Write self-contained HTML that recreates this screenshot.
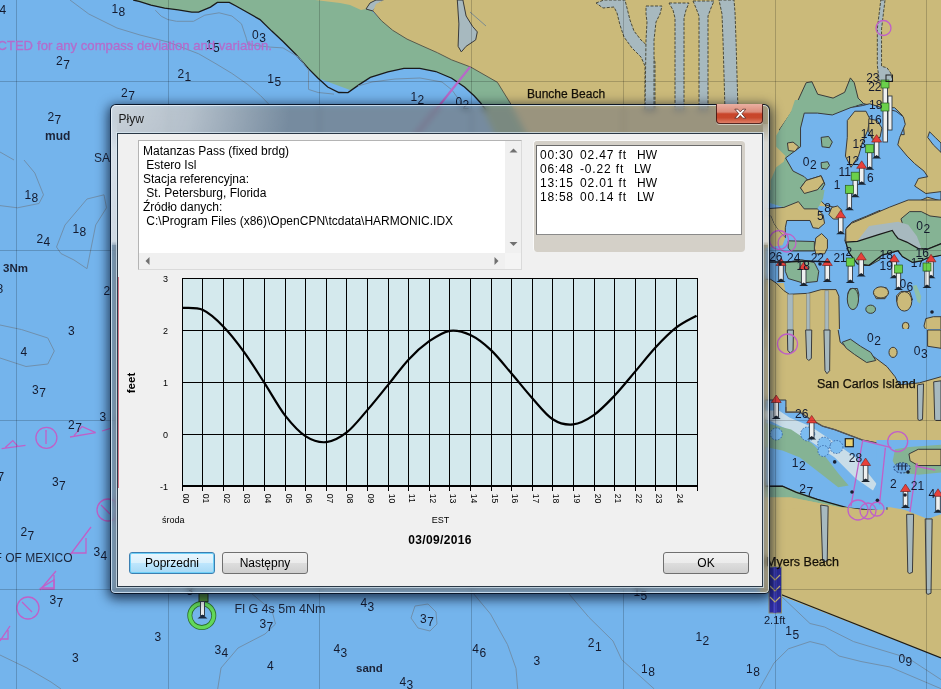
<!DOCTYPE html>
<html><head><meta charset="utf-8">
<style>
html,body{margin:0;padding:0;width:941px;height:689px;overflow:hidden;background:#74b4ec;font-family:"Liberation Sans",sans-serif;}
#map{position:absolute;left:0;top:0;}
.abs{position:absolute;}
#frame{position:absolute;left:110px;top:104px;width:658px;height:488px;border:1px solid rgba(0,12,30,0.92);border-radius:6px 6px 5px 5px;
  backdrop-filter:blur(3px) saturate(0.45) brightness(0.78);-webkit-backdrop-filter:blur(3px) saturate(0.45) brightness(0.78);background:rgba(255,255,255,0.03);
  box-shadow:0 3px 12px 2px rgba(0,10,30,0.72), inset 0 0 0 1px rgba(225,238,250,0.75);}
#sheen{position:absolute;left:111px;top:105px;width:656px;height:486px;border-radius:5px 5px 4px 4px;
  background:radial-gradient(ellipse 180px 150px at 0px 0px, rgba(255,255,255,0.62) 0%, rgba(255,255,255,0.45) 45%, rgba(255,255,255,0) 100%);}
#title{position:absolute;left:118.5px;top:112px;font-size:12px;color:#1a1a1a;}
#close{position:absolute;left:716px;top:104px;width:45px;height:19px;border:1px solid rgba(70,25,20,0.9);border-top:none;border-radius:0 0 4px 4px;
  background:linear-gradient(#eab0a2 0%,#dc8c7a 42%,#c9452a 52%,#c8482c 72%,#e08068 100%);box-shadow:0 1px 0 rgba(255,255,255,0.5);}
#client{position:absolute;left:117px;top:133px;width:644px;height:452px;background:#f0f0f0;border:1px solid #2a3846;box-shadow:0 0 0 1px rgba(220,235,245,0.7);}
#txt{position:absolute;left:138px;top:140px;width:382px;height:128px;background:#fff;border:1px solid;border-color:#b4b4b4 #dadada #dadada #b4b4b4;}
#txtc{position:absolute;left:143px;top:144px;font-size:12px;line-height:14px;color:#000;white-space:pre;}
#vs{position:absolute;left:505px;top:141px;width:16px;height:112px;background:#f0f0f0;}
#hs{position:absolute;left:139px;top:253px;width:366px;height:16px;background:#f0f0f0;}
#corner{position:absolute;left:505px;top:253px;width:16px;height:16px;background:#f4f4f4;}
#tpanel{position:absolute;left:533px;top:140px;width:211px;height:111px;background:#d4d0c8;border-radius:4px;border-top:1px solid #fafafa;border-left:1px solid #fafafa;}
#tlist{position:absolute;left:536px;top:145px;width:204px;height:88px;background:#fff;border:1px solid #8a8a8a;border-top-color:#6a6a6a;border-left-color:#6a6a6a;}
.tl{position:absolute;font-size:12px;line-height:14px;color:#000;white-space:pre;}
#tlcx{position:absolute;left:540px;top:147px;font-size:12px;line-height:14px;color:#000;white-space:pre;}
.btn{position:absolute;height:20px;border:1px solid #707070;border-radius:3px;background:linear-gradient(#f2f2f2 0%,#ebebeb 50%,#dddddd 51%,#cfcfcf 100%);font-size:12px;text-align:center;line-height:20px;color:#000;}
.btn.def{border-color:#3c7fb1;background:linear-gradient(#eaf6fd 0%,#d9f0fc 50%,#bee6fd 51%,#a7d9f5 100%);box-shadow:inset 0 0 0 1px #6fd0f8;}
</style></head><body>
<svg id="map" width="941" height="689" viewBox="0 0 941 689">
<defs>
<style>
.w{fill:#74b4ec}.g{fill:#85b394}.t{fill:#cbba7a}.c{fill:#a7b9bf}
.k{stroke:#1a1a1a;stroke-width:1.3;fill:none}
.ks{stroke:#3a3a3a;stroke-width:1;vector-effect:non-scaling-stroke}
.ks *{vector-effect:non-scaling-stroke}
.ct{stroke:#5a5a48;stroke-width:1;fill:none;vector-effect:non-scaling-stroke}
.gr{stroke:#8e9c9c;stroke-width:1;fill:none}
</style>
</defs>
<rect width="941" height="689" class="w"/>
<!-- top green band -->
<path class="g" d="M133.2,0 L380,0 L371.9,11.2 L381.5,20.8 L392.7,30.3 L407,39.1 L423,46.3 L437.4,52.7 L451.7,59.9 L470.6,67 L497.4,82.3 L510.8,104 L535,145 L500,145 L318.1,78.2 L308.5,68.6 L295.7,54.3 L283,41.5 L271.8,31.1 L260,19.6 L248,12.8 L236,6 L229.3,2.4 L217.3,2.4 L210.5,7.1 L198.6,12.2 L191.8,12.2 L178.2,9.9 L164.6,8.2 L151,5.1 L139.1,1.4 Z"/>
<!-- blue bay under green -->
<path class="w" d="M300,100 L318.1,78.2 L327.7,87 L338.8,92.5 L348,92.6 L359.2,84.6 L370.3,77.4 L387.9,71.8 L403.9,68.3 L419.8,68.3 L435.8,71.5 L451.7,78.2 L464.5,87 L474.1,95.8 L480,102.2 L500,145 L300,145 Z"/>
<path class="k" d="M133.2,0 L139.1,1.4 L151,5.1 L164.6,8.2 L178.2,9.9 L191.8,12.2 L198.6,12.2 L210.5,7.1 L217.3,2.4 L229.3,2.4 L236,6 L248,12.8 L260,19.6 L271.8,31.1 L283,41.5 L295.7,54.3 L308.5,68.6 L318.1,78.2 L327.7,87 L338.8,92.5 L348,92.6 L359.2,84.6 L370.3,77.4 L387.9,71.8 L403.9,68.3 L419.8,68.3 L435.8,71.5 L451.7,78.2 L464.5,87 L474.1,95.8 L480,102.2 L486,110"/>
<!-- top tan land -->
<path class="t" d="M315,0 L376,0 L370,3 L366,9 L361,10 L350,5 L340,3 Z"/>
<path class="c ks" d="M366,9 L370,3 L376,0 L386,0 L378,4 L373,11 Z"/>
<path class="t" d="M384,0 L941,0 L941,658 L782,596 L770,593 L760,593 L760,160 L540,160 L510.8,104 L497.4,82.3 L470.6,67 L451.7,59.9 L437.4,52.7 L423,46.3 L407,39.1 L392.7,30.3 L381.5,20.8 L373,11 L376,4 Z"/>
<path class="ct" d="M373,11 L381.5,20.8 L392.7,30.3 L407,39.1 L423,46.3 L437.4,52.7 L451.7,59.9 L470.6,67 L497.4,82.3 L510.8,104"/>
<!-- grey creek near 460 -->
<path class="c ks" d="M457.3,0 L458.9,23.9 L458.1,46.3 L461.3,51.9 L466.1,46.3 L475.7,39.9 L477.3,31.9 L472.5,26.3 L466.1,16 L462.9,0 Z"/>
<!-- canals top -->
<g class="c" stroke="#4a4a3a" stroke-width="1" stroke-dasharray="3,1.5">
<path d="M596,3 L604,0 L625,0 L627,8 L630,20 L634,31 L641,40 L651,49 L655,62 L655,110 L645,110 L645,66 L641,57 L632,48 L624,37 L620,25 L617,13 L614,7 L603,8 Z"/>
<path d="M646,6 L662,6 L660,14 L656,22 L654,40 L654,110 L645,110 L646,40 L647,22 L646,14 Z"/>
<path d="M669,3 L689,3 L686,10 L684,18 L684,110 L675,110 L675,18 L673,10 Z"/>
<path d="M693,1 L714,1 L711,8 L708,16 L708,110 L699,110 L699,16 L696,8 Z"/>
<path d="M719,0 L734,0 L735,12 L736,40 L738,110 L725,110 L723,40 L722,14 Z"/>
</g>
<!-- right region E: y 0-130 -->
<g transform="translate(760,0) scale(0.19234)">
<path class="c" stroke="#4a4a3a" stroke-width="1" stroke-dasharray="3,1.5" vector-effect="non-scaling-stroke" d="M628,0 L650,0 L632,150 L632,345 L660,352 L680,380 L690,420 L650,430 L620,420 L610,340 L610,150 Z"/>
<path class="g ks" d="M100,676 L180,560 L240,430 L270,425 L300,490 L380,510 L440,480 L470,405 L490,430 L510,510 L540,540 L600,550 L620,560 L620,676 Z"/>
<path class="w ks" d="M220,600 L250,580 L350,600 L420,570 L540,540 L580,560 L660,560 L700,560 L740,600 L750,700 L220,700 Z"/>
</g>
<!-- right region A: y 100-220 -->
<g transform="translate(765,100) scale(0.18702)">
<path class="g" d="M160,0 L500,0 L510,20 L460,40 L360,80 L280,70 L210,70 L190,150 L190,250 L110,310 L150,380 L210,410 L230,430 L300,410 L320,450 L280,520 L240,560 L170,560 L110,520 L30,540 L30,430 L60,360 L100,330 L110,300 L60,250 L60,190 L140,60 Z"/>
<path class="w ks" d="M210,70 L280,70 L360,80 L460,40 L520,30 L560,20 L620,40 L700,60 L740,90 L750,130 L720,200 L710,240 L760,300 L800,340 L850,380 L870,410 L820,420 L800,460 L860,500 L941,490 L941,540 L870,520 L780,560 L700,600 L640,620 L600,642 L420,642 L390,580 L320,560 L280,520 L320,450 L300,410 L230,430 L210,410 L150,380 L110,310 L190,250 L190,150 Z"/>
<path class="t ks" d="M440,110 L480,60 L540,60 L560,100 L550,160 L520,230 L500,300 L460,360 L430,300 L440,200 Z"/>
<path class="t ks" d="M555,100 L600,110 L625,150 L615,200 L575,210 L555,170 Z"/>
<path class="g ks" d="M300,200 L340,195 L360,225 L345,255 L305,250 Z"/>
<path class="g ks" d="M300,335 L335,330 L345,350 L330,370 L302,365 Z"/>
<path class="t ks" d="M120,230 L150,225 L180,250 L160,275 L125,270 Z"/>
<path class="t ks" d="M190,470 L220,430 L300,405 L315,440 L280,480 L210,500 Z"/>
<path class="w ks" d="M880,170 L910,200 L941,230 L941,280 L900,240 L870,200 Z"/>
</g>
<path class="w" d="M769,200 L941,220 L941,345 L769,345 Z"/>
<!-- G: [765,190] s=6.887 -->
<g transform="translate(765,190) scale(0.14520)">
<path class="g" d="M0,0 L410,0 L400,60 L360,130 L270,130 L230,80 L130,120 L30,90 L0,90 Z"/>
<path class="t ks" d="M244.5,-14.5 L283,-66 L386,-98 L405.6,-53 L361,-1.4 L271,24 Z"/>
<path class="w" d="M0,90 L30,90 L130,120 L140,210 L560,210 L560,700 L0,700 Z"/>
<path class="t ks" d="M0,130 L130,120 L230,80 L270,130 L360,130 L400,170 L410,230 L370,265 L330,260 L310,210 L150,210 L140,260 L140,330 L100,290 L60,230 L40,180 L0,180 Z"/>
<path class="t ks" d="M440,170 L460,120 L500,110 L530,140 L520,200 L470,200 Z"/>
<path class="t ks" d="M340,400 L350,330 L390,300 L430,340 L430,400 L410,440 L350,440 Z"/>
<path class="g ks" d="M160,350 L340,355 L340,420 L180,420 L160,400 Z"/>
<path class="g ks" d="M140,500 L250,480 L340,500 L370,560 L360,630 L260,640 L160,610 L140,560 Z"/>
<path class="t" d="M0,180 L40,180 L60,230 L100,290 L140,330 L120,380 L0,400 Z"/>
<path class="t ks" d="M550,350 L560,260 L600,220 L700,180 L792,140 L792,360 Z"/>
<path class="c" d="M640,350 L700,260 L792,230 L792,320 Z"/>
<path class="g ks" d="M550,350 L792,300 L792,480 L720,520 L660,520 L610,450 L580,400 Z"/>
<path class="t" d="M0,640 L130,640 L140,700 L0,700 Z"/>
</g>
<!-- F: [840,200] s=6.891 -->
<g transform="translate(840,200) scale(0.14512)">
<path class="t ks" d="M40,200 L80,160 L200,110 L340,50 L470,0 L700,0 L700,380 L600,400 L560,420 L500,430 L430,390 L400,350 L290,380 L200,450 L120,440 L60,360 L40,290 Z"/>
<path class="g ks" d="M420,130 L480,80 L560,80 L620,110 L700,120 L700,300 L600,340 L540,330 L470,290 Z"/>
<path class="c" d="M120,280 L200,180 L400,150 L470,170 L530,250 L560,330 L600,380 L700,330 L700,360 L560,360 L460,290 L400,265 L380,240 L360,210 L260,240 L120,285 Z"/>
<path class="g" d="M40,290 L120,285 L260,240 L360,210 L380,240 L400,265 L460,290 L540,335 L600,340 L700,300 L700,380 L600,400 L560,420 L500,430 L430,390 L400,350 L290,380 L200,450 L120,440 L60,360 Z"/>
<path class="k" d="M40,290 L120,285 L260,240 L360,210 L380,240 L400,265 L460,290 L540,335 L600,340 L700,300" vector-effect="non-scaling-stroke" style="stroke-width:1.2"/>
<path class="k" d="M40,290 L60,360 L120,440 L200,450 L290,380 L400,350 L430,390 L500,430 L560,420 L600,400 L700,380" vector-effect="non-scaling-stroke" style="stroke-width:1.2"/>
<path class="t ks" d="M230,640 L260,605 L320,605 L335,640 L310,680 L250,680 Z"/>
<path class="t ks" d="M390,660 L420,630 L480,630 L500,689 L390,700 Z"/>
<path class="g ks" d="M55,640 L70,610 L120,610 L130,650 L125,700 L55,700 Z"/>
</g>
<!-- I: [765,255] s=5.347 -->
<g transform="translate(765,255) scale(0.18702)">
<path class="t ks" d="M0,130 L30,130 L60,150 L100,190 L130,210 L230,205 L300,185 L380,185 L395,220 L400,500 L0,500 Z"/>
<g class="c" stroke="#505050" stroke-width="1.6" vector-effect="non-scaling-stroke">
<path d="M120,210 L150,210 L150,500 L120,500 Z"/>
<path d="M222,205 L240,205 L240,500 L222,500 Z"/>
<path d="M320,190 L340,190 L340,500 L320,500 Z"/>
</g>
<ellipse class="g ks" cx="470" cy="235" rx="30" ry="57"/>
<ellipse class="g ks" cx="565" cy="290" rx="26" ry="22"/>
<ellipse class="t ks" cx="620" cy="200" rx="40" ry="30"/>
<ellipse class="t ks" cx="745" cy="248" rx="40" ry="52"/>
<ellipse class="t ks" cx="752" cy="380" rx="18" ry="20"/>
<path class="t ks" d="M860,340 L900,330 L941,330 L941,500 L880,500 L870,420 L850,380 Z"/>
<path class="g ks" d="M410,481 L430,455 L470,450 L495,481 L495,500 L410,500 Z"/>
<path fill="#8fc0a8" d="M790,165 L810,160 L835,220 L830,260 L815,250 Z"/>
</g>
<!-- C: [765,330] s=4.92 -->
<g transform="translate(765,330) scale(0.20325)">
<path class="t" d="M0,0 L360,0 L370,60 L420,100 L520,120 L600,180 L640,230 L660,270 L760,260 L866,230 L866,400 L0,400 Z"/>
<path class="w" d="M360,-5 L360,0 L370,60 L420,100 L520,120 L600,180 L640,230 L660,270 L760,260 L866,230 L866,-5 Z"/><path class="ks" fill="none" d="M360,0 L370,60 L420,100 L520,120 L600,180 L640,230 L660,270 L760,260 L866,230"/>
<path class="t ks" d="M800,0 L866,0 L866,90 L800,80 Z"/>
<path class="g ks" d="M380,60 L420,45 L470,80 L520,110 L545,150 L500,160 L440,120 L400,90 Z"/>
<ellipse class="t ks" cx="630" cy="110" rx="20" ry="25"/>
<g class="c ks">
<path d="M110,0 L140,0 L138,100 L125,115 L112,100 Z"/>
<path d="M200,0 L230,0 L228,140 L215,150 L205,140 Z"/>
<path d="M290,0 L320,0 L318,200 L305,215 L295,200 Z"/>
<path d="M750,270 L780,265 L775,440 L760,445 L752,440 Z"/>
<path d="M830,255 L866,250 L866,445 L840,445 L835,440 Z"/>
</g>
</g>
<!-- H: [765,400] s=5.739 -->
<g transform="translate(765,400) scale(0.17425)">
<path class="w ks" d="M0,0 L120,0 L120,40 L120,70 L200,70 L260,110 L330,150 L400,170 L480,200 L560,230 L660,250 L700,250 L700,640 L480,625 L300,570 L180,530 L100,495 L0,495 Z"/>
<path fill="#c9dde8" d="M80,60 L140,100 L260,150 L380,230 L520,330 L640,480 L620,520 L520,450 L400,330 L250,230 L30,120 L0,110 L0,60 Z"/>
<path class="g" d="M0,130 L150,170 L270,250 L350,330 L420,420 L480,490 L420,500 L330,430 L200,330 L100,290 L0,270 Z"/>
<path class="g" d="M0,490 L100,495 L200,530 L300,570 L450,610 L480,625 L300,590 L150,560 L0,560 Z"/>
<path class="t" d="M0,560 L150,560 L300,590 L480,625 L700,645 L700,700 L0,700 Z"/>
<path class="k" vector-effect="non-scaling-stroke" d="M0,495 L100,495 L180,530 L300,570 L480,620 L700,640"/>
<path class="k" vector-effect="non-scaling-stroke" style="stroke:#555" d="M120,40 L120,70 L200,70 L260,110 L330,150 L400,170 L480,200 L560,230 L660,250"/>
</g>
<!-- D: [765,440] s=4.307 -->
<g transform="translate(765,440) scale(0.23218)">
<path class="t" d="M0,300 L350,290 L420,300 L600,300 L650,320 L700,340 L758,320 L758,939 L73,672 L20,658 L0,658 Z"/>
<path class="w" d="M480,0 L758,0 L758,320 L700,340 L650,320 L600,300 L540,290 L480,290 Z"/>
<path class="g" d="M560,40 L620,30 L758,20 L758,140 L660,150 L580,140 L550,90 Z"/>
<path class="t ks" d="M620,60 L660,40 L758,40 L758,110 L660,110 L625,90 Z"/>
<ellipse cx="590" cy="120" rx="35" ry="22" fill="#6aa8e0" stroke="#203a70" stroke-width="1" stroke-dasharray="2,1.5" vector-effect="non-scaling-stroke"/><path d="M565,112 L615,112 M575,100 L575,130 M590,100 L590,130 M605,100 L605,130" stroke="#203050" stroke-width="1.2" vector-effect="non-scaling-stroke"/>
<g class="c ks">
<path d="M240,280 L272,285 L268,520 L255,525 L248,520 Z"/>
<path d="M610,320 L640,320 L635,570 L622,575 L615,570 Z"/>
<path d="M690,340 L720,340 L715,660 L702,665 L695,660 Z"/>
</g>
</g>
<!-- bottom right tan -->
<path class="k" d="M781,594.5 L941,658"/>
<g fill="none" stroke="#7090ad" stroke-width="1">
<path d="M155.3,10.2 L161.2,16.2 L168,19.6 L176.5,21.3 L193.5,21.3 L204.8,15.2 L219.1,12.8 L231.9,16 L241.5,23.9 L246.3,38.3 L247.9,44.7 L270.2,47.1 L283,47.9 L298.9,57.4 L308.5,70.2 L308.5,89.4 L318.1,92.5 L334,94.1"/>
<path d="M70,0 L88.8,14 L117,28 L140,35 L168,42 L198.7,53.8 L216,63.8 L231.9,73.4 L247.9,84.6 L260.6,95.7 L268.6,104"/>
<path d="M0,152 L14,160"/>
<path d="M0,205.6 L17.4,207.8 L39,203.5 L43.5,194.8 L34.8,173 L24,160"/>
<path d="M56.5,247 L65,225 L87,199 L104,194.8 L106.5,207.8 L95.7,225 L91.3,247 L87,268.7 L74,260 L60.9,253.5 Z"/>
<path d="M0,325 L21.7,329.6 L47.8,338 L54.3,351 L47.8,364 L26,366.5 L0,358"/>
<path d="M473.5,593.6 L490.5,614 L507.5,644.6 L516,668.4 L517.7,689"/>
<path d="M568.7,593.6 L589,617.4 L613,641 L621.7,659.7 L654.3,689"/>
<path d="M781,596 L810,623.5 L824.6,627 L853.6,641.6 L908,658 L941,679.6"/>
<path d="M759.4,689 L774,663 L788.4,648.8 L810,641.6 L824.6,645.2 L839,656 L861,661.5 L890,667 L941,688.7"/>
<path d="M0,655 L27,668 L51,682 L61,689"/>
<path d="M251.7,593.6 L272,610.6 L275.5,624 L265,634 L238,648 L221,668 L217.7,689"/>
<path d="M358,86 L372,82 L395,79 L420,78 L442,82 L452,90 L462,104"/>
<path d="M415,606 L428,604 L436,612 L437,624 L430,631 L418,628 L411,618 Z"/>
</g>
<circle cx="776.3" cy="434" r="6" fill="#7cbcf0" stroke="#3a6aa8" stroke-width="1" stroke-dasharray="1.5,1.5"/>
<circle cx="807.7" cy="434" r="7" fill="#7cbcf0" stroke="#3a6aa8" stroke-width="1" stroke-dasharray="1.5,1.5"/>
<circle cx="824.2" cy="443.6" r="6.5" fill="#7cbcf0" stroke="#3a6aa8" stroke-width="1" stroke-dasharray="1.5,1.5"/>
<circle cx="836.4" cy="447" r="6.5" fill="#7cbcf0" stroke="#3a6aa8" stroke-width="1" stroke-dasharray="1.5,1.5"/>
<circle cx="823.4" cy="451" r="5.5" fill="#7cbcf0" stroke="#3a6aa8" stroke-width="1" stroke-dasharray="1.5,1.5"/>
<path d="M470,67 L400,155" stroke="#b868c8" stroke-width="2.2" fill="none"/>
<path d="M470,12 L486,26" stroke="#7a8a90" stroke-width="1" fill="none"/>
<g stroke="#c060c8" stroke-width="1.3" fill="none">
<circle cx="46.4" cy="437.8" r="10.5"/><path d="M46,432 L46,444 M45,431 L47,431"/>
<path d="M1.6,448.6 L25.5,445.4 M5,447.8 L12.8,440.6 L18,446.4"/>
<path d="M70,437 L95.7,432.6 M74,435.6 L82,426.5 L95.7,432.6"/><path d="M102,431 L111.6,428"/>
<circle cx="108" cy="510" r="11"/><path d="M101,505 L110,514"/>
<path d="M70,555 L91,527 M72,553 L86,553 L86,538"/>
<path d="M40,590 L56,571 M42,589 L54,589 L54,575"/>
<circle cx="28" cy="608" r="11"/><path d="M22,602 L32,612"/>
<path d="M41,588 L54,580 L54,588 Z"/>
<path d="M0,641 L10,626 M0,639 L8,639 L8,630"/>
</g>
<circle cx="201.8" cy="615.6" r="12" fill="none" stroke="#2d6e2d" stroke-width="5"/>
<circle cx="201.8" cy="615.6" r="12" fill="none" stroke="#62d85a" stroke-width="3.4"/>
<rect x="199" y="593.5" width="9" height="8" fill="#5a9a3a" stroke="#2a3a20" stroke-width="1"/>
<rect x="200.5" y="601.5" width="4" height="14" fill="#e8ecec" stroke="#34404a" stroke-width="1"/>
<path d="M197.5,618.5 L202.5,614.5 L207.5,618.5 Z" fill="#1a2a40"/>
<rect x="769" y="567" width="12.5" height="46" fill="#2c2c9c" stroke="#8a8a70" stroke-width="1"/>
<rect x="773.5" y="567" width="3" height="46" fill="#4848c8"/>
<path d="M770,575 L775,580 L780,575 M770,586 L775,591 L780,586 M770,597 L775,602 L780,597" stroke="#c8b878" stroke-width="1.2" fill="none"/>
<rect x="874.3" y="141.6" width="4.6" height="15" fill="#eef0f0" stroke="#303840" stroke-width="0.9"/>
<path d="M872.1,158.6 L876.6,155.1 L881.1,158.6 Z" fill="#1a2430"/>
<path d="M876.6,134.6 L881.6,142.1 L871.6,142.1 Z" fill="#e8403a" stroke="#702020" stroke-width="0.6"/>
<rect x="859.4" y="167.8" width="4.6" height="15" fill="#eef0f0" stroke="#303840" stroke-width="0.9"/>
<path d="M857.2,184.8 L861.7,181.3 L866.2,184.8 Z" fill="#1a2430"/>
<path d="M861.7,160.8 L866.7,168.3 L856.7,168.3 Z" fill="#e8403a" stroke="#702020" stroke-width="0.6"/>
<rect x="838.4" y="217.3" width="4.6" height="15" fill="#eef0f0" stroke="#303840" stroke-width="0.9"/>
<path d="M836.2,234.3 L840.7,230.8 L845.2,234.3 Z" fill="#1a2430"/>
<path d="M840.7,210.3 L845.7,217.8 L835.7,217.8 Z" fill="#e8403a" stroke="#702020" stroke-width="0.6"/>
<rect x="778.7" y="265.0" width="4.6" height="15" fill="#eef0f0" stroke="#303840" stroke-width="0.9"/>
<path d="M776.5,282.0 L781.0,278.5 L785.5,282.0 Z" fill="#1a2430"/>
<path d="M781.0,258.0 L786.0,265.5 L776.0,265.5 Z" fill="#e8403a" stroke="#702020" stroke-width="0.6"/>
<rect x="801.4" y="269.0" width="4.6" height="15" fill="#eef0f0" stroke="#303840" stroke-width="0.9"/>
<path d="M799.2,286.0 L803.7,282.5 L808.2,286.0 Z" fill="#1a2430"/>
<path d="M803.7,262.0 L808.7,269.5 L798.7,269.5 Z" fill="#e8403a" stroke="#702020" stroke-width="0.6"/>
<rect x="825.0" y="265.0" width="4.6" height="15" fill="#eef0f0" stroke="#303840" stroke-width="0.9"/>
<path d="M822.8,282.0 L827.3,278.5 L831.8,282.0 Z" fill="#1a2430"/>
<path d="M827.3,258.0 L832.3,265.5 L822.3,265.5 Z" fill="#e8403a" stroke="#702020" stroke-width="0.6"/>
<rect x="858.9" y="259.4" width="4.6" height="15" fill="#eef0f0" stroke="#303840" stroke-width="0.9"/>
<path d="M856.7,276.4 L861.2,272.9 L865.7,276.4 Z" fill="#1a2430"/>
<path d="M861.2,252.4 L866.2,259.9 L856.2,259.9 Z" fill="#e8403a" stroke="#702020" stroke-width="0.6"/>
<rect x="891.9" y="261.3" width="4.6" height="15" fill="#eef0f0" stroke="#303840" stroke-width="0.9"/>
<path d="M889.7,278.3 L894.2,274.8 L898.7,278.3 Z" fill="#1a2430"/>
<path d="M894.2,254.3 L899.2,261.8 L889.2,261.8 Z" fill="#e8403a" stroke="#702020" stroke-width="0.6"/>
<rect x="928.7" y="261.3" width="4.6" height="15" fill="#eef0f0" stroke="#303840" stroke-width="0.9"/>
<path d="M926.5,278.3 L931.0,274.8 L935.5,278.3 Z" fill="#1a2430"/>
<path d="M931.0,254.3 L936.0,261.8 L926.0,261.8 Z" fill="#e8403a" stroke="#702020" stroke-width="0.6"/>
<rect x="773.9" y="402.0" width="4.6" height="15" fill="#eef0f0" stroke="#303840" stroke-width="0.9"/>
<path d="M771.7,419.0 L776.2,415.5 L780.7,419.0 Z" fill="#1a2430"/>
<path d="M776.2,395.0 L781.2,402.5 L771.2,402.5 Z" fill="#e8403a" stroke="#702020" stroke-width="0.6"/>
<rect x="809.4" y="422.4" width="4.6" height="15" fill="#eef0f0" stroke="#303840" stroke-width="0.9"/>
<path d="M807.2,439.4 L811.7,435.9 L816.2,439.4 Z" fill="#1a2430"/>
<path d="M811.7,415.4 L816.7,422.9 L806.7,422.9 Z" fill="#e8403a" stroke="#702020" stroke-width="0.6"/>
<rect x="863.3" y="465.0" width="4.6" height="15" fill="#eef0f0" stroke="#303840" stroke-width="0.9"/>
<path d="M861.1,482.0 L865.6,478.5 L870.1,482.0 Z" fill="#1a2430"/>
<path d="M865.6,458.0 L870.6,465.5 L860.6,465.5 Z" fill="#e8403a" stroke="#702020" stroke-width="0.6"/>
<rect x="903.2" y="491.0" width="4.6" height="15" fill="#eef0f0" stroke="#303840" stroke-width="0.9"/>
<path d="M901.0,508.0 L905.5,504.5 L910.0,508.0 Z" fill="#1a2430"/>
<path d="M905.5,484.0 L910.5,491.5 L900.5,491.5 Z" fill="#e8403a" stroke="#702020" stroke-width="0.6"/>
<rect x="935.7" y="495.8" width="4.6" height="15" fill="#eef0f0" stroke="#303840" stroke-width="0.9"/>
<path d="M933.5,512.8 L938.0,509.3 L942.5,512.8 Z" fill="#1a2430"/>
<path d="M938.0,488.8 L943.0,496.3 L933.0,496.3 Z" fill="#e8403a" stroke="#702020" stroke-width="0.6"/>
<rect x="867.5" y="152.7" width="4.4" height="15" fill="#eef0f0" stroke="#303840" stroke-width="0.9"/>
<path d="M865.2,169.7 L869.7,166.2 L874.2,169.7 Z" fill="#1a2430"/>
<rect x="865.7" y="144.7" width="8" height="8" fill="#6ad04a" stroke="#2a5a20" stroke-width="0.7"/>
<rect x="853.0" y="180.2" width="4.4" height="15" fill="#eef0f0" stroke="#303840" stroke-width="0.9"/>
<path d="M850.7,197.2 L855.2,193.7 L859.7,197.2 Z" fill="#1a2430"/>
<rect x="851.2" y="172.2" width="8" height="8" fill="#6ad04a" stroke="#2a5a20" stroke-width="0.7"/>
<rect x="847.2" y="193.3" width="4.4" height="15" fill="#eef0f0" stroke="#303840" stroke-width="0.9"/>
<path d="M844.9,210.3 L849.4,206.8 L853.9,210.3 Z" fill="#1a2430"/>
<rect x="845.4" y="185.3" width="8" height="8" fill="#6ad04a" stroke="#2a5a20" stroke-width="0.7"/>
<rect x="848.1" y="266.0" width="4.4" height="15" fill="#eef0f0" stroke="#303840" stroke-width="0.9"/>
<path d="M845.8,283.0 L850.3,279.5 L854.8,283.0 Z" fill="#1a2430"/>
<rect x="846.3" y="258.0" width="8" height="8" fill="#6ad04a" stroke="#2a5a20" stroke-width="0.7"/>
<rect x="896.3" y="273.0" width="4.4" height="15" fill="#eef0f0" stroke="#303840" stroke-width="0.9"/>
<path d="M894.0,290.0 L898.5,286.5 L903.0,290.0 Z" fill="#1a2430"/>
<rect x="894.5" y="265.0" width="8" height="8" fill="#6ad04a" stroke="#2a5a20" stroke-width="0.7"/>
<rect x="924.8" y="271.0" width="4.4" height="15" fill="#eef0f0" stroke="#303840" stroke-width="0.9"/>
<path d="M922.5,288.0 L927.0,284.5 L931.5,288.0 Z" fill="#1a2430"/>
<rect x="923.0" y="263.0" width="8" height="8" fill="#6ad04a" stroke="#2a5a20" stroke-width="0.7"/>
<rect x="883" y="84" width="4.5" height="58" fill="#eef0f0" stroke="#303840" stroke-width="0.9"/>
<rect x="888" y="96" width="4" height="34" fill="#eef0f0" stroke="#303840" stroke-width="0.9"/>
<rect x="881" y="80" width="8" height="8" fill="#6ad04a" stroke="#2a5a20" stroke-width="0.7"/>
<rect x="881" y="103" width="8" height="8" fill="#6ad04a" stroke="#2a5a20" stroke-width="0.7"/>
<rect x="886" y="75" width="6.5" height="6.5" fill="none" stroke="#202020" stroke-width="1"/>
<rect x="845.3" y="438.7" width="8" height="8" fill="#e8d070" stroke="#202020" stroke-width="1.2"/>
<g stroke="#c060c8" stroke-width="1.3" fill="none">
<circle cx="883.5" cy="28" r="7.5"/>
<circle cx="787.5" cy="344" r="10"/>
<circle cx="779" cy="240" r="9.5"/>
<circle cx="787" cy="243" r="9"/>
<circle cx="897.7" cy="441.6" r="10"/>
<circle cx="858" cy="510" r="10"/>
<circle cx="868" cy="511" r="8"/>
<circle cx="877" cy="509" r="7"/>
<path d="M862.7,440.5 L850.9,506.3 M862.7,440.5 L891.3,447.6 M885.4,447.6 L879.5,504.4 M917,463 L910,512 M915,466 L935,470"/>
</g>
<path d="M769,262 L785,262 L808,261 L830,262" stroke="#1a1a1a" stroke-width="1.3" fill="none"/>
<circle cx="834.7" cy="461.9" r="1.8" fill="#1a2030"/>
<circle cx="877.4" cy="500.2" r="1.8" fill="#1a2030"/>
<circle cx="905" cy="495" r="1.8" fill="#1a2030"/>
<circle cx="932" cy="312" r="1.8" fill="#1a2030"/>
<circle cx="780" cy="264" r="1.8" fill="#1a2030"/>
<circle cx="820" cy="264" r="1.8" fill="#1a2030"/>
<circle cx="852" cy="492" r="1.8" fill="#1a2030"/>
<circle cx="908" cy="472" r="1.8" fill="#1a2030"/>
<g font-family="Liberation Sans" font-size="12" fill="#141a2e">
<text x="868.3" y="123.6">16</text>
<text x="860.8" y="137.6">14</text>
<text x="852.5" y="147.9">13</text>
<text x="845.9" y="164.6">12</text>
<text x="838.4" y="175.9">11</text>
<text x="833.7" y="189.0">1</text>
<text x="824.3" y="212.4">8</text>
<text x="816.9" y="219.9">5</text>
<text x="866.2" y="81.6">23</text>
<text x="868.2" y="91.3">22</text>
<text x="869.1" y="108.6">18</text>
<text x="769.2" y="261.0">26</text>
<text x="787.1" y="262.0">24</text>
<text x="810.7" y="262.0">22</text>
<text x="833.4" y="262.0">21</text>
<text x="845.5" y="256.3">2</text>
<text x="879.5" y="259.2">18</text>
<text x="879.5" y="269.6">19</text>
<text x="910.7" y="266.6">17</text>
<text x="915.5" y="257.3">16</text>
<text x="795.0" y="417.90000000000003">26</text>
<text x="848.8" y="461.6">28</text>
<text x="889.9" y="488.1">2</text>
<text x="910.8" y="490.40000000000003">21</text>
<text x="796.5" y="269.6">18</text>
</g>
<g font-family="Liberation Sans" font-size="12" fill="#141a2e">
<text x="867.0" y="181.6">6</text>
<text x="802.6999999999999" y="165.6">0</text>
<text x="809.9" y="169.1">2</text>
<text x="899.4" y="287.6">0</text>
<text x="906.6" y="291.1">6</text>
<text x="916.3" y="229.9">0</text>
<text x="923.5" y="233.4">2</text>
<text x="867.0" y="341.6">0</text>
<text x="874.2" y="345.1">2</text>
<text x="913.8" y="354.6">0</text>
<text x="921.0" y="358.1">3</text>
<text x="791.8" y="466.6">1</text>
<text x="799.0" y="470.1">2</text>
<text x="799.1999999999999" y="492.6">2</text>
<text x="806.4" y="496.1">7</text>
<text x="928.6" y="498.1">4</text>
</g>
<!-- grid -->
<g fill="rgba(0,0,0,0.19)"><rect x="16" y="0" width="1" height="689"/><rect x="168" y="0" width="1" height="689"/><rect x="319" y="0" width="1" height="689"/><rect x="471" y="0" width="1" height="689"/><rect x="623" y="0" width="1" height="689"/><rect x="775" y="0" width="1" height="689"/><rect x="926" y="0" width="1" height="689"/><rect x="0" y="81" width="941" height="1"/><rect x="0" y="250" width="941" height="1"/><rect x="0" y="420" width="941" height="1"/><rect x="0" y="589" width="941" height="1"/></g>
<g font-family="Liberation Sans" font-size="12" fill="#141a2e">
<text x="111.4" y="12.6">1</text>
<text x="118.6" y="16.1">8</text>
<text x="56.0" y="65.0">2</text>
<text x="63.2" y="68.5">7</text>
<text x="177.4" y="77.6">2</text>
<text x="184.6" y="81.1">1</text>
<text x="121.0" y="96.6">2</text>
<text x="128.2" y="100.1">7</text>
<text x="47.4" y="120.6">2</text>
<text x="54.6" y="124.1">7</text>
<text x="205.8" y="48.6">1</text>
<text x="213.0" y="52.1">5</text>
<text x="252.1" y="38.9">0</text>
<text x="259.3" y="42.4">3</text>
<text x="267.2" y="82.8">1</text>
<text x="274.4" y="86.3">5</text>
<text x="410.4" y="100.6">1</text>
<text x="417.6" y="104.1">2</text>
<text x="24.4" y="198.6">1</text>
<text x="31.6" y="202.1">8</text>
<text x="72.4" y="232.6">1</text>
<text x="79.6" y="236.1">8</text>
<text x="36.4" y="242.6">2</text>
<text x="43.6" y="246.1">4</text>
<text x="68.1" y="334.6">3</text>
<text x="20.4" y="356.1">4</text>
<text x="32.0" y="393.6">3</text>
<text x="39.2" y="397.1">7</text>
<text x="68.1" y="428.6">2</text>
<text x="75.3" y="432.1">7</text>
<text x="99.4" y="420.6">3</text>
<text x="51.9" y="486.1">3</text>
<text x="59.1" y="489.6">7</text>
<text x="20.4" y="536.1">2</text>
<text x="27.6" y="539.6">7</text>
<text x="93.4" y="556.1">3</text>
<text x="100.6" y="559.6">4</text>
<text x="49.4" y="603.6">3</text>
<text x="56.6" y="607.1">7</text>
<text x="154.4" y="641.1">3</text>
<text x="71.9" y="662.1">3</text>
<text x="259.4" y="627.6">3</text>
<text x="266.6" y="631.1">7</text>
<text x="214.4" y="653.6">3</text>
<text x="221.6" y="657.1">4</text>
<text x="266.9" y="669.6">4</text>
<text x="360.4" y="607.3">4</text>
<text x="367.6" y="610.8">3</text>
<text x="420.1" y="622.6">3</text>
<text x="427.3" y="626.1">7</text>
<text x="333.4" y="653.2">4</text>
<text x="340.6" y="656.7">3</text>
<text x="399.4" y="685.6">4</text>
<text x="406.6" y="689.1">3</text>
<text x="472.2" y="653.2">4</text>
<text x="479.4" y="656.7">6</text>
<text x="533.4" y="665.1">3</text>
<text x="587.8" y="647.1">2</text>
<text x="595.0" y="650.6">1</text>
<text x="633.4" y="596.1">1</text>
<text x="640.6" y="599.6">5</text>
<text x="695.4" y="641.1">1</text>
<text x="702.6" y="644.6">2</text>
<text x="641.1" y="672.6">1</text>
<text x="648.3" y="676.1">8</text>
<text x="746.1" y="672.6">1</text>
<text x="753.3" y="676.1">8</text>
<text x="785.3" y="635.0">1</text>
<text x="792.5" y="638.5">5</text>
<text x="898.4" y="662.9">0</text>
<text x="905.6" y="666.4">9</text>
<text x="-0.6" y="13.6">4</text>
<text x="-3.6" y="292.6">8</text>
<text x="103.4" y="294.6">2</text>
<text x="-2.6" y="481.1">7</text>
<text x="186.4" y="594.6">3</text>
<text x="455.4" y="105.6">0</text>
<text x="462.6" y="109.1">2</text>
<text x="45" y="140" font-weight="bold" fill="#1c2438">mud</text>
<text x="94" y="162" fill="#1c2438">SA</text>
<text x="3" y="272" font-weight="bold" fill="#1c2438" font-size="11.5">3Nm</text>
<text x="72.5" y="561.5" text-anchor="end" fill="#1c2438">GULF OF MEXICO</text>
<text x="234.5" y="612.5" fill="#1c2438" font-size="12.5">Fl G 4s 5m 4Nm</text>
<text x="356" y="671.5" font-weight="bold" fill="#1c2438" font-size="11.5">sand</text>
<text x="527" y="97.6" fill="#141008" stroke="#141008" stroke-width="0.25">Bunche Beach</text>
<text x="817" y="388" fill="#141008" stroke="#141008" stroke-width="0.25" font-size="12.5">San Carlos Island</text>
<text x="839" y="566" text-anchor="end" fill="#141008" stroke="#141008" stroke-width="0.25" font-size="12.5">Fort Myers Beach</text>
<text x="764" y="624" fill="#141a2e" font-size="11">2.1ft</text>
</g>
<g font-family="Liberation Sans" font-size="13" fill="#b46ccc" stroke="#b46ccc" stroke-width="0.3">
<text x="33" y="49.6" text-anchor="end">CORRECTED</text>
<text x="37" y="49.6" textLength="235" lengthAdjust="spacingAndGlyphs">for any compass deviation and variation.</text>
</g>
</svg>

<div id="frame"></div><div id="sheen"></div><div class="abs" style="left:111px;top:118px;width:6px;height:127px;background:linear-gradient(rgba(215,225,235,0),rgba(220,228,236,0.8) 25%,rgba(220,228,236,0.85) 97%,rgba(220,228,236,0.3))"></div><div class="abs" style="left:763px;top:124px;width:5px;height:121px;background:linear-gradient(rgba(220,222,220,0.2),rgba(225,226,224,0.85) 15%,rgba(225,226,224,0.85) 97%,rgba(225,226,224,0.3))"></div>
<div id="title">Pływ</div>
<div id="close"><svg width="47" height="19" style="position:absolute;left:-1px;top:0"><path d="M19.5,9.5 L23.8,13.8 M19.5,13.8 L23.8,9.5" transform="translate(-2,-4) scale(1)" stroke="none"/><g transform="translate(24.3,9.7)"><path d="M-5.5,-4.5 L-2.5,-4.5 L0,-1.8 L2.5,-4.5 L5.5,-4.5 L1.6,0 L5.5,4.5 L2.5,4.5 L0,1.8 L-2.5,4.5 L-5.5,4.5 L-1.6,0 Z" fill="#fff" stroke="#5a2a22" stroke-width="0.8"/></g></svg></div>
<div id="client"></div>
<div id="txt"></div>
<div id="vs"></div><div id="hs"></div><div id="corner"></div>
<svg class="abs" style="left:0;top:0;position:absolute" width="941" height="300"><g fill="#707070">
<path d="M509.5,152.5 L517.5,152.5 L513.5,148.5 Z"/><path d="M509.5,242 L517.5,242 L513.5,246 Z"/>
<path d="M149.5,257 L149.5,265 L145.5,261 Z"/><path d="M494.5,257 L494.5,265 L498.5,261 Z"/></g></svg>
<div id="txtc">Matanzas Pass (fixed brdg)
 Estero Isl
Stacja referencyjna:
 St. Petersburg, Florida
Źródło danych:
 C:\Program Files (x86)\OpenCPN\tcdata\HARMONIC.IDX</div>
<div id="tpanel"></div>
<div id="tlist"></div>
<div class="tl" style="left:540px;top:148px;letter-spacing:0.75px">00:30</div><div class="tl" style="left:580px;top:148px;letter-spacing:0.85px">02.47 ft</div><div class="tl" style="left:637.0px;top:148px">HW</div>
<div class="tl" style="left:540px;top:162px;letter-spacing:0.75px">06:48</div><div class="tl" style="left:580px;top:162px;letter-spacing:0.85px">-0.22 ft</div><div class="tl" style="left:633.9px;top:162px">LW</div>
<div class="tl" style="left:540px;top:176px;letter-spacing:0.75px">13:15</div><div class="tl" style="left:580px;top:176px;letter-spacing:0.85px">02.01 ft</div><div class="tl" style="left:637.0px;top:176px">HW</div>
<div class="tl" style="left:540px;top:190px;letter-spacing:0.75px">18:58</div><div class="tl" style="left:580px;top:190px;letter-spacing:0.85px">00.14 ft</div><div class="tl" style="left:637.0px;top:190px">LW</div>
<svg class="abs" style="left:0;top:0" width="941" height="689" viewBox="0 0 941 689">
<rect x="182" y="278" width="515" height="208" fill="#d4e9ed"/>
<g fill="#000">
<rect x="182" y="278" width="1" height="213"/>
<rect x="202" y="278" width="1" height="213"/>
<rect x="223" y="278" width="1" height="213"/>
<rect x="243" y="278" width="1" height="213"/>
<rect x="264" y="278" width="1" height="213"/>
<rect x="285" y="278" width="1" height="213"/>
<rect x="305" y="278" width="1" height="213"/>
<rect x="326" y="278" width="1" height="213"/>
<rect x="346" y="278" width="1" height="213"/>
<rect x="367" y="278" width="1" height="213"/>
<rect x="388" y="278" width="1" height="213"/>
<rect x="408" y="278" width="1" height="213"/>
<rect x="429" y="278" width="1" height="213"/>
<rect x="449" y="278" width="1" height="213"/>
<rect x="470" y="278" width="1" height="213"/>
<rect x="491" y="278" width="1" height="213"/>
<rect x="511" y="278" width="1" height="213"/>
<rect x="532" y="278" width="1" height="213"/>
<rect x="552" y="278" width="1" height="213"/>
<rect x="573" y="278" width="1" height="213"/>
<rect x="594" y="278" width="1" height="213"/>
<rect x="614" y="278" width="1" height="213"/>
<rect x="635" y="278" width="1" height="213"/>
<rect x="655" y="278" width="1" height="213"/>
<rect x="676" y="278" width="1" height="213"/>
<rect x="697" y="278" width="1" height="213"/>
<rect x="182" y="278" width="515" height="1"/>
<rect x="182" y="330" width="515" height="1"/>
<rect x="182" y="382" width="515" height="1"/>
<rect x="182" y="434" width="515" height="1"/>
<rect x="182" y="485" width="516" height="2"/>
</g>

<path d="M182.4,307.9 C185.8,308.3 196.1,306.9 203.0,310.0 C209.8,313.1 216.7,319.6 223.5,326.7 C230.4,333.7 237.3,342.7 244.1,352.1 C251.0,361.6 257.8,372.8 264.7,383.3 C271.5,393.9 278.4,406.7 285.2,415.6 C292.1,424.4 299.0,432.0 305.8,436.4 C312.7,440.8 319.5,442.8 326.4,442.1 C333.2,441.4 340.1,437.6 347.0,432.2 C353.8,426.8 360.7,417.7 367.5,409.9 C374.4,402.0 381.2,393.3 388.1,384.9 C395.0,376.5 401.8,366.7 408.7,359.4 C415.5,352.1 422.4,346.0 429.2,341.2 C436.1,336.5 443.0,331.9 449.8,330.8 C456.7,329.8 463.5,331.8 470.4,335.0 C477.2,338.2 484.1,343.6 491.0,350.1 C497.8,356.5 504.7,365.5 511.5,373.5 C518.4,381.4 525.2,390.3 532.1,397.9 C538.9,405.5 545.8,414.8 552.7,419.2 C559.5,423.6 566.4,425.1 573.2,424.4 C580.1,423.7 586.9,419.8 593.8,415.1 C600.7,410.3 607.5,403.0 614.4,395.8 C621.2,388.6 628.1,380.0 634.9,371.9 C641.8,363.8 648.7,354.8 655.5,347.5 C662.4,340.1 669.2,333.0 676.1,327.7 C682.9,322.4 693.2,317.7 696.6,315.7" fill="none" stroke="#000" stroke-width="2.2"/>
<g font-size="9" fill="#000" font-family="Liberation Sans">
<text font-size="8.6" transform="translate(183.2,493.8) rotate(90)">00</text>
<text font-size="8.6" transform="translate(203.2,493.8) rotate(90)">01</text>
<text font-size="8.6" transform="translate(224.2,493.8) rotate(90)">02</text>
<text font-size="8.6" transform="translate(244.2,493.8) rotate(90)">03</text>
<text font-size="8.6" transform="translate(265.2,493.8) rotate(90)">04</text>
<text font-size="8.6" transform="translate(286.2,493.8) rotate(90)">05</text>
<text font-size="8.6" transform="translate(306.2,493.8) rotate(90)">06</text>
<text font-size="8.6" transform="translate(327.2,493.8) rotate(90)">07</text>
<text font-size="8.6" transform="translate(347.2,493.8) rotate(90)">08</text>
<text font-size="8.6" transform="translate(368.2,493.8) rotate(90)">09</text>
<text font-size="8.6" transform="translate(389.2,493.8) rotate(90)">10</text>
<text font-size="8.6" transform="translate(409.2,493.8) rotate(90)">11</text>
<text font-size="8.6" transform="translate(430.2,493.8) rotate(90)">12</text>
<text font-size="8.6" transform="translate(450.2,493.8) rotate(90)">13</text>
<text font-size="8.6" transform="translate(471.2,493.8) rotate(90)">14</text>
<text font-size="8.6" transform="translate(492.2,493.8) rotate(90)">15</text>
<text font-size="8.6" transform="translate(512.2,493.8) rotate(90)">16</text>
<text font-size="8.6" transform="translate(533.2,493.8) rotate(90)">17</text>
<text font-size="8.6" transform="translate(553.2,493.8) rotate(90)">18</text>
<text font-size="8.6" transform="translate(574.2,493.8) rotate(90)">19</text>
<text font-size="8.6" transform="translate(595.2,493.8) rotate(90)">20</text>
<text font-size="8.6" transform="translate(615.2,493.8) rotate(90)">21</text>
<text font-size="8.6" transform="translate(636.2,493.8) rotate(90)">22</text>
<text font-size="8.6" transform="translate(656.2,493.8) rotate(90)">23</text>
<text font-size="8.6" transform="translate(677.2,493.8) rotate(90)">24</text>
<text x="168" y="282" text-anchor="end">3</text>
<text x="168" y="334" text-anchor="end">2</text>
<text x="168" y="386" text-anchor="end">1</text>
<text x="168" y="438" text-anchor="end">0</text>
<text x="168" y="490" text-anchor="end">-1</text>
<text x="162" y="523">środa</text>
<text x="440.6" y="523" text-anchor="middle">EST</text>
<text x="440" y="544" text-anchor="middle" font-size="12" font-weight="bold" letter-spacing="0.35">03/09/2016</text>
<text transform="translate(135,383) rotate(-90)" text-anchor="middle" font-size="11.5" font-weight="bold">feet</text>
</g>
<line x1="118.5" y1="277" x2="118.5" y2="488" stroke="#d07888" stroke-width="1"/>
</svg>
<div class="btn def" style="left:129px;top:552px;width:84px;">Poprzedni</div>
<div class="btn" style="left:222px;top:552px;width:84px;">Następny</div>
<div class="btn" style="left:663px;top:552px;width:84px;">OK</div>
</body></html>
